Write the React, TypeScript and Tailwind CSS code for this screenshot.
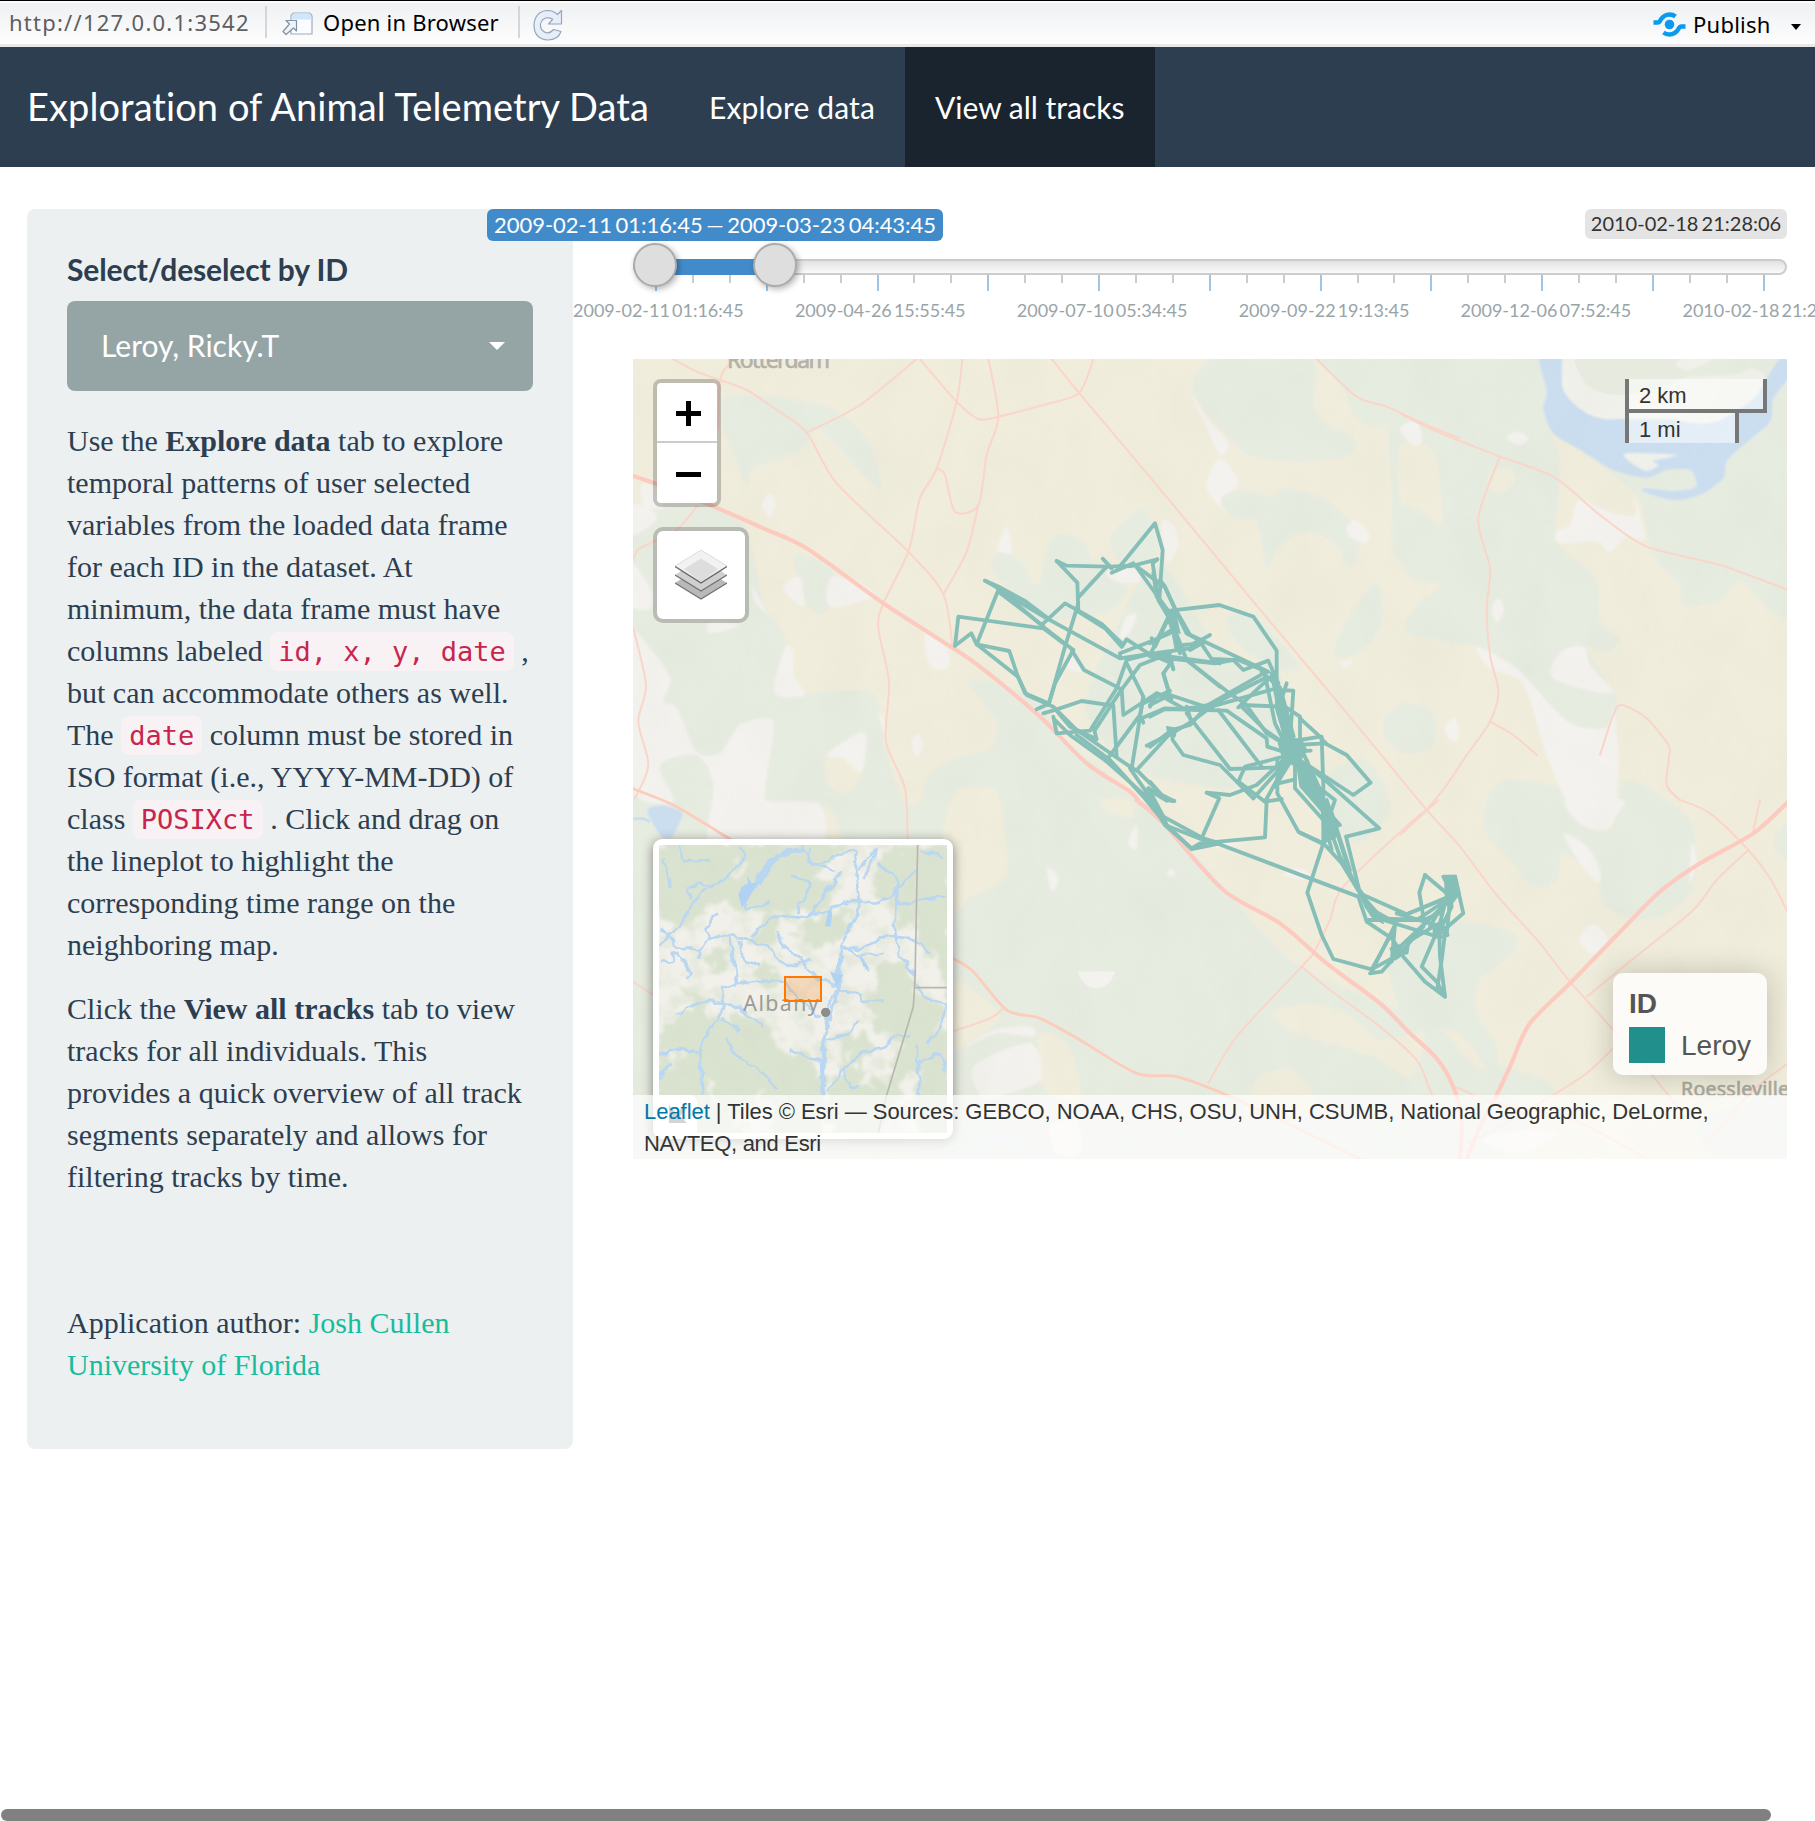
import React from "react";

type Pt = [number, number];

const parse = (s: string): Pt[] =>
  s.trim().split(/\s+/).map((p) => p.split(",").map(Number) as Pt);

/** Smooth (Catmull-Rom) path through a list of points. */
function smooth(s: string, closed = false): string {
  const p = parse(s);
  const n = p.length;
  const at = (i: number) => (closed ? p[(i + n) % n] : p[Math.max(0, Math.min(n - 1, i))]);
  let d = `M${p[0][0]},${p[0][1]}`;
  for (let i = 0; i < (closed ? n : n - 1); i++) {
    const [a, b, c, e] = [at(i - 1), at(i), at(i + 1), at(i + 2)];
    d += `C${b[0] + (c[0] - a[0]) / 7},${b[1] + (c[1] - a[1]) / 7} ${c[0] - (e[0] - b[0]) / 7},${c[1] - (e[1] - b[1]) / 7} ${c[0]},${c[1]}`;
  }
  return closed ? d + "Z" : d;
}

/* The map is stored as sheets; every sheet has an origin and is drawn at a third of its size. */
interface Sheet {
  x: number;
  y: number;
  green?: string[];
  cream?: string[];
  white?: string[];
  water?: string[];
  sand?: string[];
  minor?: string[];
  medium?: string[];
  major?: string[];
}

const sheets: Sheet[] = [
  {
    x: 930, y: 800,
    green: ["0,0 240,-30 390,-180 780,150 1080,480 1410,630 1590,750 1650,1080 -900,1080 -900,150 -300,90"],
    cream: [
      "80,-30 200,-20 225,100 230,230 120,290 75,330 40,120",
      "510,0 600,0 610,50 540,40",
      "1150,260 1250,170 1440,40 1520,200 1440,420 1340,520 1210,480 1140,330",
      "1030,640 1130,610 1250,640 1350,720 1480,700 1440,830 1330,770 1100,700",
      "960,880 1000,820 1080,810 1140,860 1150,940 960,940",
      "330,700 420,740 450,900 380,900 330,840",
      "60,540 190,620 200,670 60,750",
    ],
    white: [
      "130,800 300,730 330,840 200,890 160,900",
      "110,740 190,690 300,680 310,710 200,700",
      "350,200 385,235 365,272",
      "620,70 620,145 595,130",
      "850,130 940,130 860,145",
      "1060,225 1110,205 1150,240",
      "710,220 725,205 735,222 720,230",
      "360,980 440,960 450,1060 380,1060",
    ],
    medium: ["70,475 130,515 230,630 330,655 450,720 620,820 740,830 890,885 1050,960 1290,1077"],
    minor: [
      "60,697 180,655 220,625",
      "835,850 920,710 1115,500 1150,460 1200,360 1240,260 1440,70 1490,30",
      "1115,500 1200,570 1350,680 1460,780 1500,870 1540,960",
    ],
    major: ["620,0 700,70 880,270 1050,370 1190,490 1350,610 1440,700 1520,775 1570,860 1595,960 1590,1077"],
  },
  {
    x: 630, y: 355,
    green: [
      "285,130 420,125 560,145 650,190 720,270 755,400 700,360 630,280 560,220 520,280 430,320 370,340 350,395 325,330 280,220",
      "0,560 180,450 330,500 375,620 400,750 470,860 435,1010 640,1005 735,1020 760,1150 800,1300 830,1480 0,1480",
      "495,600 600,640 610,730 570,780 520,730",
      "1080,620 1130,590 1180,630 1215,690 1300,650 1380,760 1240,800 1130,700",
      "1020,980 1120,990 1260,1080 1300,1440 1120,1440 1100,1310 1040,1310 960,1370 930,1440 870,1440 890,1270 980,1210 1080,1180 1100,1100 1050,1030",
    ],
    cream: ["590,1205 660,1210 695,1260 640,1320 590,1280", "580,1350 620,1400 640,1500 560,1500"],
    white: [
      "0,450 60,460 80,490 50,520 0,540",
      "35,390 75,400 100,460 40,450",
      "0,620 60,700 60,760 0,750",
      "0,850 60,880 120,970 100,1040 140,1060 200,1190 270,1195 330,1110 420,1090 430,1140 405,1300 420,1340 570,1350 560,1500 250,1500 250,1290 200,1200 90,1230 130,1340 0,1290",
      "395,450 420,415 435,450 420,485",
      "460,700 510,665 520,755",
      "605,665 700,690 730,725 600,755",
      "885,830 950,880 955,940 900,930",
      "1105,570 1130,515 1145,590 1105,590",
      "465,880 490,890 490,960 525,1020 435,1015",
      "370,700 410,775 375,740",
      "240,800 330,810 240,835",
      "845,1160 865,1135 880,1170 860,1205",
      "590,1200 685,1135 710,1150 695,1250 640,1210",
      "745,1075 765,1100 770,1150",
    ],
    water: ["55,1360 100,1352 155,1370 150,1400 125,1445 95,1445 60,1390"],
    minor: [
      "130,12 200,50 270,75 350,105 440,165 530,233 620,385 835,590 940,718 968,880",
      "295,30 270,75 265,220",
      "530,233 690,150 860,12",
      "870,12 980,140 1045,192 1105,185 1240,150 1340,120 1370,70 1390,12",
      "997,12 980,140 920,340 870,430 835,590 760,745 745,820 777,980 768,1160 825,1300 833,1470",
      "1075,12 1105,185 1070,300 1045,450 975,470 945,360 920,340",
      "1045,450 1010,590 940,718",
      "10,820 48,990 25,1100 55,1230 15,1330",
      "200,455 140,525 30,580 12,610",
      "0,1875 70,1920",
    ],
    medium: ["0,1298 130,1350 280,1440 330,1470"],
    major: ["0,360 75,385 240,450 400,520 530,580 760,745 970,880 1050,935 1230,1085 1370,1225 1500,1310 1530,1345"],
  },
  {
    x: 1040, y: 355,
    green: [
      "520,12 810,12 820,150 860,210 940,250 930,300 800,320 640,305 560,240 460,110",
      "860,0 1260,0 1540,0 1540,500 1200,490 1200,300 1150,200 1020,215 950,190 910,100",
      "540,440 600,405 690,425 730,400 850,430 930,500 960,560 930,640 880,560 800,530 720,570 680,640 650,500 580,490",
      "1060,430 1110,430 1200,500 1280,500 1280,660 1200,680 1120,640 1060,590",
      "1280,640 1180,720 1100,800 1180,840 1280,860",
      "1010,685 1025,800 960,890 880,900 930,780",
      "560,790 640,780 720,860 780,940 700,940 600,870",
      "40,545 130,560 160,620 260,700 200,770 60,780 0,700",
      "210,550 300,460 330,500 350,600 260,640",
      "300,680 380,640 480,800 560,900 720,960 740,1200 600,1300 300,1250 150,1100 150,990 200,880",
      "870,1260 980,1215 1050,1360 960,1460 860,1400",
      "1030,1100 1080,1050 1160,1060 1190,1120 1130,1190 1050,1170",
    ],
    white: [
      "455,120 495,180 565,265 540,300 500,220",
      "540,310 595,385 540,435 575,490 500,400",
      "1080,220 1130,200 1145,260 1120,270",
      "920,520 945,495 985,530 980,565 930,545",
      "365,500 400,510 415,570 380,620",
      "900,920 940,915 915,940",
      "200,650 280,640 300,680 230,680",
      "1215,1125 1240,1090 1255,1135 1235,1150",
      "240,850 260,785 290,780 270,830",
      "90,900 130,950 80,940",
    ],
    minor: [
      "35,12 110,105 375,420 640,740 850,990 1020,1195 1160,1365 1260,1475 1370,1620 1500,1765 1590,1880 1720,2025 1840,2165 1920,2265",
      "830,12 950,125 1040,155 1160,210 1260,250",
      "1160,1365 1220,1290 1280,1200",
    ],
  },
  {
    x: 1400, y: 355,
    green: [
      "0,0 460,0 470,500 480,570 590,680 600,800 660,850 620,890 560,880 640,1010 660,1060 620,1115 540,1120 450,1060 350,950 230,875 20,830 60,740 120,690 0,610",
      "400,0 440,110 430,160 460,240 480,330 640,390 720,440 760,600 840,690 850,750 960,740 1020,680 1180,760 1180,0",
      "0,1050 60,1060 105,1120 90,1180 0,1190",
    ],
    cream: [
      "0,270 100,290 125,500 60,470 0,430",
      "465,240 640,360 710,430 700,480 540,440 490,530 470,510 480,330",
      "270,350 330,340 345,380 300,415 265,400",
    ],
    white: [
      "540,435 640,475 705,480 705,425 735,550 680,545 630,590 590,560 480,565 470,530 510,510",
      "10,225 45,200 65,245 45,270",
      "320,250 350,230 385,250 360,270",
      "275,760 295,730 312,765 290,802",
      "460,920 500,880 555,878 570,930 640,1010 560,1005 460,970",
      "230,875 350,940 450,1050 520,1110 620,1120 640,1060 655,1200 640,1400 570,1420 510,1360 440,1200 370,990 270,940",
      "135,1120 165,1090 175,1150 150,1155",
    ],
    water: [
      "418,0 490,0 490,100 540,160 610,190 680,190 820,195 900,200 960,195 1060,130 1100,70 1150,0 1170,60 1120,130 1110,200 1030,270 980,320 970,370 900,420 820,435 730,410 740,400 820,408 880,400 890,385 870,345 800,345 740,368 640,345 550,290 460,235 430,160 440,110",
    ],
    sand: [
      "490,0 530,12 555,85 620,115 740,110 850,70 1000,60 1060,40 1095,70 1060,130 960,195 880,205 800,190 610,190 540,160 490,100",
      "680,295 830,300 760,318 775,330 740,348 690,320",
      "810,12 930,12 860,45",
    ],
    minor: [
      "0,175 100,225 300,305 460,365 600,480 740,575 960,630 1170,707",
      "300,305 235,490 270,640 260,760 270,900 295,1010 270,1100 200,1200",
      "270,1100 340,1140 410,1200",
      "600,1200 640,1080 665,1050 740,1090 805,1170 808,1200 800,1290 840,1335",
    ],
  },
  {
    x: 1400, y: 800,
    green: [
      "260,0 320,-60 500,-30 560,80 640,80 680,-60 840,30 885,100 880,260 800,340 700,360 610,310 590,240 490,160 470,240 400,260 340,190 260,100",
      "-40,370 200,365 340,400 340,460 240,540 230,640 290,740 280,830 180,700 60,690 0,640",
      "1180,50 1120,130 1180,190",
      "190,830 300,800 430,840 450,885 200,885",
      "-20,830 60,840 80,900 -20,900",
      "900,960 1180,880 1180,1077 960,1077",
    ],
    white: [
      "500,0 670,0 620,70 570,85 520,50",
      "490,100 560,140 600,210 595,250 540,190",
      "537,418 580,373 623,418 580,463",
      "875,130 890,180 870,250",
      "250,1020 380,990 480,1000 360,1060",
    ],
    minor: [
      "0,105 115,0",
      "840,0 930,40 1045,150 1110,235 1165,340",
      "1080,0 1060,90",
      "1045,150 950,240 880,330 720,460 560,590",
      "640,745 560,820 460,885 300,980 200,1030",
      "1165,790 1060,870 920,1030",
      "170,862 290,910 520,960 740,1077",
    ],
    major: ["1170,0 1060,100 900,190 780,275 680,375 520,540 390,670 330,800 290,885 240,980 200,1077"],
  },
];

const trackNorth = [
  "75,437 85,350 340,385 400,430", "75,437 124,400 140,433 238,453 262,525 285,580 355,610",
  "205,270 140,433 260,527", "165,242 205,265 345,385 430,450", "165,242 210,262 285,303 350,352",
  "205,268 345,352 570,475 660,462 870,490", "205,275 340,378", "340,370 405,310 445,332 515,372 580,435",
  "430,450 375,550 355,615", "445,310 405,440 357,610", "425,450 462,510 575,568 580,645 680,580 725,595",
  "380,183 442,248 445,335 525,385 575,440", "380,183 410,197 530,200 605,198 682,178", "530,200 445,292",
  "518,176 545,205", "545,218 610,190", "565,205 675,70 698,150 688,300", "682,178 668,190 685,300 715,350",
  "610,192 705,262 735,325 780,405", "615,195 680,285 720,340", "575,440 590,418 655,460 725,490 730,508",
  "570,460 660,425 720,400", "570,462 570,475", "320,628 355,612", "340,640 380,628",
  "262,527 290,585 370,620 420,680 500,718 490,680", "370,650 380,700 480,692 560,565 590,480 660,462",
  "495,690 570,575 630,495 720,460", "380,628 455,603 550,617 560,770", "375,660 420,705 528,783",
  "380,630 440,690 600,800 625,815 710,900 733,903", "655,865 725,902", "655,865 700,950 710,975",
  "440,705 540,780 640,890 705,970 785,1047 870,1030", "530,785 655,895", "600,805 700,950 820,1015 870,1030",
  "530,780 630,645 640,590 590,490", "605,805 640,590", "625,805 725,695", "640,668 635,655 705,625 830,630",
  "650,737 725,700 785,665 870,600", "715,340 770,480 870,560", "715,350 750,460", "720,590 700,520 725,485",
  "665,415 675,440 720,345", "640,610 720,572", "770,620 785,670",
];

const trackSouth = [
  "10,-20 20,50 60,100 80,210", "30,0 45,20 85,110 110,160 150,182 180,165", "60,100 0,225", "65,150 0,190",
  "62,92 208,75 310,110 380,212 380,330", "110,160 355,275", "150,185 185,237 250,240 280,270 355,242 385,310",
  "0,230 195,250 260,238 350,275", "0,222 120,205 150,190", "120,210 155,190 100,195", "0,220 65,250 70,268",
  "110,240 245,345 285,370 350,460 400,490", "40,280 60,345 165,380", "60,345 0,375", "0,380 20,340 100,385 165,380",
  "0,410 45,387 230,392 350,475 352,500 400,515", "165,380 350,275", "165,385 350,292", "165,385 390,322",
  "0,500 65,450 120,435 165,385", "65,450 68,480 100,525 210,555 310,655", "110,400 240,567 400,562",
  "205,390 335,560", "275,375 400,380", "265,382 330,320 375,280", "275,380 345,450 410,495", "345,285 375,430 410,500",
  "365,280 385,380 410,500", "410,310 390,370 450,410 450,500", "380,330 430,332 420,480", "335,275 385,320 435,500",
  "450,415 510,470 450,480", "515,470 520,620 520,790", "435,495 525,490 590,525 662,608 610,645 480,560",
  "510,472 530,492", "440,515 482,512", "450,540 525,600 688,745 588,770 630,940", "345,665 430,510",
  "310,655 430,520", "375,620 430,530", "265,605 285,560 400,530", "170,638 240,645 320,615 400,540",
  "170,638 208,655 155,775", "270,608 345,665 395,657", "350,660 345,772 150,790 125,805 45,735 0,660",
  "382,540 382,640 445,755 520,790", "385,610 435,598", "435,520 435,625 520,720", "440,540 515,690", "460,520 515,640 545,740",
  "470,540 490,610 555,660 535,720", "520,680 570,735 550,740", "520,690 570,830 625,930", "545,700 600,870", "530,660 600,880 625,930",
  "450,758 525,795 575,850 630,940", "520,710 545,810", "520,790 472,938 515,1065 550,1137 665,1168 735,1130",
  "0,640 45,735 160,780 200,790 625,950", "0,605 35,645 70,662", "0,632 50,662", "125,805 200,790",
  "620,920 640,945 770,1003 885,955", "625,950 650,1025 725,1075 750,1110", "640,960 680,1015 820,1020 870,1000",
  "655,1020 800,1020 890,960", "630,940 700,1020 870,1072 893,1065", "660,1180 695,1175 740,1125", "665,1175 735,1035 725,1145",
  "665,1168 725,1060", "740,1110 820,1035 925,935", "735,1120 770,1118 775,1085 850,1040", "750,1120 820,1040",
  "760,1130 825,1205 885,1250 870,1130 868,1060", "885,1250 860,1205 815,1160 865,1045", "862,1225 875,1140 885,1060",
  "870,1060 940,1000 915,890 880,890 905,940", "825,885 808,938 820,1010", "825,885 890,940", "905,890 870,1030",
  "895,900 905,980 870,1050", "770,1003 900,950", "740,1000 890,1045", "885,960 840,1040", "900,960 890,1065", "650,980 740,1030",
];

const trackFills = [
  "385,490 410,470 455,480 470,510 440,560 400,540", "515,690 550,700 560,770 520,790", "625,930 680,1000 700,1030 665,1010 645,980",
  "885,888 918,886 930,940 895,985 885,940", "720,1105 750,1095 765,1120 735,1140", "385,330 400,345 435,470 405,480 375,380",
  "440,550 470,545 520,650 520,700 450,620", "850,1035 880,1020 880,1060 850,1065", "45,85 75,95 90,160 60,140", "125,190 150,175 165,190 120,210",
  "50,440 80,445 75,470 55,465", "150,375 190,370 190,390 150,392",
];

function MapCanvas() {
  return (
    <svg className="absolute inset-0 block h-[800px] w-[1154px]" viewBox="633 359 1154 800" aria-hidden="true">
      <defs>
        <filter id="relief" x="0" y="0" width="100%" height="100%">
          <feTurbulence type="fractalNoise" baseFrequency="0.022 0.016" numOctaves="3" seed="4" />
          <feColorMatrix values="0 0 0 0 0.4  0 0 0 0 0.43  0 0 0 0 0.34  0.5 0 0 0 -0.2" />
        </filter>
        <filter id="soft" x="-5%" y="-5%" width="110%" height="110%">
          <feGaussianBlur stdDeviation="2.4" />
        </filter>
      </defs>
      <rect x="633" y="359" width="1154" height="800" fill="#f0eddc" />
      {(["green", "cream", "white", "water", "sand"] as const).map((kind) => (
        <React.Fragment key={kind}>
          {sheets.map((s) => (
            <g
              key={`${s.x}-${s.y}`}
              transform={`translate(${s.x} ${s.y}) scale(.33333)`}
              filter="url(#soft)"
              fill={{ green: "#e7ece1", cream: "#f0eddc", white: "#f4f2ee", water: "#cbdef0", sand: "#f1f1eb" }[kind]}
            >
              {(s[kind] ?? []).map((p) => <path key={p} d={smooth(p, true)} />)}
            </g>
          ))}
        </React.Fragment>
      ))}
      <rect x="633" y="359" width="1154" height="800" filter="url(#relief)" opacity="0.2" />
      <path d="M1078,971.500 H1115 Q1110,988 1096.500,988 Q1083,988 1078,971.500Z" fill="#f4f2ee" />
      <path d="M633,819 Q645,817 650,822" fill="none" stroke="#cbdef0" strokeWidth="3" />
      <path d="M950,1152 Q968,1148 966,1125 M970,1159 Q990,1132 1010,1138 T1040,1159" fill="none" stroke="#d9e5f4" strokeWidth="2.500" />
      <path d="M1574,359 Q1582,388 1608,394 Q1640,398 1660,380 L1680,359Z" fill="#e6eadf" />
      {sheets.map((s) => (
        <g key={`r${s.x}-${s.y}`} transform={`translate(${s.x} ${s.y}) scale(.33333)`} fill="none" strokeLinecap="round" strokeLinejoin="round">
          {(s.minor ?? []).map((p) => <path key={p} d={smooth(p)} stroke="#fad5c9" strokeWidth="6" />)}
          {(s.medium ?? []).map((p) => <path key={p} d={smooth(p)} stroke="#fcccbc" strokeWidth="8.500" />)}
          {(s.major ?? []).map((p) => <path key={p} d={smooth(p)} stroke="#fdcac0" strokeWidth="12.500" />)}
        </g>
      ))}
      <g fontFamily="'Noto Sans', sans-serif" fill="#b3b1a8" stroke="#b3b1a8" strokeWidth="0.600">
        <text x="727" y="367.500" fontSize="23" textLength="103">Rotterdam</text>
        <text x="1681" y="1095.500" fontSize="19.500" textLength="108" fill="#aaa89f" stroke="#aaa89f">Roessleville</text>
      </g>
      <g stroke="#86bfb7" strokeWidth="11.500" strokeLinecap="round" strokeLinejoin="round">
        <g transform="translate(930 500) scale(.33333)" fill="none">
          {trackNorth.map((p) => <polyline key={p} points={p} />)}
        </g>
        <g transform="translate(1150 580) scale(.33333)" fill="none">
          {trackSouth.map((p) => <polyline key={p} points={p} />)}
        </g>
        <g transform="translate(1150 580) scale(.33333)" fill="#86bfb7" strokeWidth="4">
          {trackFills.map((p) => <polygon key={p} points={p} />)}
        </g>
      </g>
    </svg>
  );
}

const forest = [
  "87,75 620,75 600,130 560,180 640,200 600,250 520,290 400,280 330,270 260,250 200,290 160,320 87,280",
  "740,120 860,75 960,75 960,250 900,300 870,260 830,330 780,240 720,200",
  "880,180 960,160 960,560 920,420 870,380 850,300",
  "580,290 640,270 640,340 600,370 500,350 520,320", "400,290 450,310 420,370 370,370",
  "740,440 810,420 850,480 860,560 830,660 760,640 700,560 740,500", "850,520 930,560 900,660 850,760 800,830 780,900 790,720 830,640",
  "87,640 200,560 290,600 380,580 440,650 470,720 460,800 360,850 300,940 87,940", "440,720 560,730 560,940 420,940",
  "620,650 720,640 700,740 640,760", "600,800 680,760 780,800 760,940 600,940", "870,700 960,640 960,940 860,940",
  "220,400 280,390 300,440 250,450", "160,500 230,540 190,570", "380,420 450,470 400,500",
];
const meadow = ["640,700 690,690 660,730", "700,780 740,760 730,830", "460,600 540,640 500,680", "230,780 280,830 250,850", "110,700 150,690 130,740", "300,140 340,130 330,170"];
const rivers = [
  "330,75 345,110 300,160 230,210 190,250 150,310 110,360 87,370", "87,320 115,350 150,385 210,385 240,350 310,350 360,360 430,400 480,440 540,415",
  "520,80 440,110 400,150 370,200 340,260 420,250", "510,75 560,130 620,110 680,90 675,140 685,230 680,280 640,370 630,440 620,500 595,560 585,640 575,740 575,830",
  "685,150 740,90 700,180", "640,150 600,200 530,290 440,285 360,350", "530,290 600,270 660,240 740,250 800,210 860,150",
  "800,210 795,320 810,400 850,460 880,530 945,550 930,620 890,670", "640,380 700,385 770,350 840,355 900,400", "640,380 690,410 715,445", "690,405 760,405",
  "620,500 560,470 510,420 450,360 445,335", "300,355 305,400 320,490 275,510 280,570 230,640 210,720 220,830", "145,580 190,555 275,545 340,570 400,620",
  "320,490 380,480 460,485 490,520 570,590", "330,360 340,410 390,440", "620,520 670,515 700,545 760,540", "590,655 660,635 680,600",
  "290,655 320,710 400,760 440,810", "480,685 500,700 580,730", "87,705 150,685 210,700", "590,820 640,750 690,700 760,680 800,650 835,650",
  "640,750 660,800 690,795", "540,80 545,130 620,150", "480,170 540,190 500,280", "100,120 120,210", "87,420 130,425 130,395 180,450 170,480",
  "265,280 225,330 240,350", "740,130 800,180 805,250 880,240 945,225", "860,730 930,705 945,760", "860,680 870,830", "150,75 160,120 240,120", "870,90 945,115", "87,775 125,735", "270,600 330,635", "210,390 210,420", "250,195 180,200 185,235",
];

function MiniMap() {
  return (
    <div className="absolute left-[20px] top-[480px] size-[300px] rounded-[9px] border-[6px] border-white bg-white shadow-[0_2px_12px_rgba(0,0,0,0.45)]">
      <svg className="block size-[288px]" viewBox="87 75 864 864" aria-hidden="true">
        <defs>
          <filter id="rough" x="-5%" y="-5%" width="110%" height="110%">
            <feTurbulence type="fractalNoise" baseFrequency="0.02" numOctaves="4" seed="8" />
            <feDisplacementMap in="SourceGraphic" scale="95" xChannelSelector="R" yChannelSelector="G" />
            <feGaussianBlur stdDeviation="5" />
          </filter>
          <filter id="wiggle" x="-5%" y="-5%" width="110%" height="110%">
            <feTurbulence type="fractalNoise" baseFrequency="0.03" numOctaves="2" seed="2" />
            <feDisplacementMap in="SourceGraphic" scale="26" xChannelSelector="R" yChannelSelector="G" />
          </filter>
          <filter id="speckle" x="0" y="0" width="100%" height="100%">
            <feTurbulence type="fractalNoise" baseFrequency="0.018" numOctaves="5" seed="12" />
            <feColorMatrix values="0 0 0 0 0.68  0 0 0 0 0.75  0 0 0 0 0.6  3 0 0 0 -1.25" />
          </filter>
        </defs>
        <rect x="87" y="75" width="864" height="864" fill="#f1f0ea" />
        <g filter="url(#rough)" fill="#dae3d0">{forest.map((p) => <path key={p} d={smooth(p, true)} />)}</g>
        <g filter="url(#rough)" fill="#eff0e8">{meadow.map((p) => <path key={p} d={smooth(p, true)} />)}</g>
        <rect x="87" y="75" width="864" height="864" filter="url(#speckle)" opacity="0.5" />
        <g filter="url(#wiggle)" fill="none" stroke="#bad7f2" strokeWidth="8" strokeLinejoin="round">
          {rivers.map((p) => <path key={p} d={smooth(p)} />)}
          <path d="M630,400 L628,500 L585,640 L578,830" strokeWidth="11" />
          <path d="M520,85 L440,108 L385,190" strokeWidth="14" />
        </g>
        <path d="M350,165 L365,190 L385,185 L350,245 L335,262 L325,225 L335,200 L355,190Z M595,270 L607,275 L602,320 L585,318Z M690,405 L718,445 L700,440Z M600,455 L640,465 L620,500Z" fill="#b1d2f3" />
        <g fill="none" stroke="#b9b6b2" strokeWidth="5"><path d="M863,75 L855,480 L850,560 L770,825 L745,939" /><path d="M853,503 H951" /></g>
        <text x="340" y="573" fontSize="64" textLength="226" fontFamily="'Noto Sans', sans-serif" fill="#9b9b98">Albany</text>
        <circle cx="587" cy="577" r="14" fill="#8d8d8c" />
        <rect x="465" y="471" width="108" height="72" fill="#ff7800" fillOpacity="0.2" stroke="#ff7800" strokeWidth="6" />
      </svg>
      <div className="absolute bottom-0 left-0 flex size-[38px] items-center justify-center rounded-tr-[8px] bg-white">
        <svg viewBox="0 0 18 18" className="size-[18px]" aria-hidden="true"><path d="M0,0 V18 H18 L11,11 L17,4 L12,4 L7,8Z" fill="#6f6f6f" /></svg>
      </div>
    </div>
  );
}

function LayersIcon() {
  return (
    <svg viewBox="0 0 52 52" className="size-[52px]" aria-hidden="true">
      <path d="M0,34 L26,18 L52,34 L26,50Z" fill="#b9b9b9" /><path d="M0,34 L26,50 L52,34" fill="none" stroke="#737373" strokeWidth="1.300" />
      <path d="M0,26 L26,10 L52,26 L26,42Z" fill="#cfcfcf" /><path d="M0,26 L26,42 L52,26" fill="none" stroke="#737373" strokeWidth="1.300" />
      <path d="M0,17 L26,1 L52,17 L26,33Z" fill="#f2f2f2" stroke="#c9c9c9" strokeWidth="0.600" /><path d="M9,20 L26,9.500 L43,20 L26,33Z" fill="#dddddd" />
      <path d="M0,17.500 L26,34 L52,17.500" fill="none" stroke="#666" strokeWidth="1.300" />
    </svg>
  );
}

function Toolbar() {
  return (
    <header className="flex h-[47px] items-start border-t border-b-[3px] border-t-black border-b-[#e6e8ea] bg-linear-to-b from-[#eef0f2] to-[#fdfdfd] font-['Noto_Sans',sans-serif] text-[22px] leading-[43px] text-black shadow-[inset_0_2px_0_#fcfcfc]">
      <span className="ml-[9px] w-[240px] whitespace-nowrap tracking-[1.240px] text-[#5e5e5e]">http://127.0.0.1:3542</span>
      <span className="ml-[16px] mt-[5px] h-[32px] w-[2px] bg-[#d4d6d7]" />
      <svg className="ml-[15px] mt-[10px] h-[26px] w-[32px]" viewBox="0 0 32 26" aria-hidden="true">
        <path d="M9,6 Q9,2 13,2 H26 Q30,2 30,6 V23 H9Z" fill="#fafdff" stroke="#9dacbd" strokeWidth="1.200" />
        <path d="M9.600,8.500 V6 Q9.600,2.600 13,2.600 H26 Q29.400,2.600 29.400,6 V8.500Z" fill="#cfe6fb" />
        <path d="M4,9.500 H14.500 V20 L11.500,17 L4,23.500 L1,20.500 L7.500,13Z" fill="#eef3fa" stroke="#8391a3" strokeWidth="1.200" strokeLinejoin="round" />
      </svg>
      <span className="ml-[9px] w-[177px] whitespace-nowrap tracking-[0.220px]">Open in Browser</span>
      <span className="ml-[18px] mt-[5px] h-[32px] w-[2px] bg-[#d4d6d7]" />
      <svg className="ml-[13px] mt-[8px] h-[32px] w-[30px]" viewBox="0 0 30 32" aria-hidden="true">
        <path d="M24.500,5.500 L28.500,1.500 V15 H15.500 L19.800,10.200 Q14,6.500 9.500,11 Q5.500,16 9,21 Q15,27 20.500,20.500 L28,22.500 Q25,31 15,31 Q1,30 1,16 Q2,2 15,1.500 Q20,1.500 24.500,5.500Z" fill="#e6eefa" stroke="#98a6bb" strokeWidth="1.200" strokeLinejoin="round" />
      </svg>
      <svg className="ml-auto mt-[11px] h-[26px] w-[33px]" viewBox="0 0 33 26" fill="none" stroke="#0a9bf0" strokeWidth="4.400" aria-hidden="true">
        <circle cx="16.500" cy="12.500" r="4.800" fill="#0a9bf0" stroke="none" />
        <path d="M0.500,10.500 H4.500 Q6.500,10.500 7.500,8 Q11,2.500 16.500,2.500 Q20,2.500 22.500,4.500" />
        <path d="M32.500,14.500 H28.500 Q26.500,14.500 25.500,17 Q22,22.500 16.500,22.500 Q13,22.500 10.500,20.500" />
      </svg>
      <span className="ml-[7px] mt-[2px] w-[79px] whitespace-nowrap tracking-[0.250px]">Publish</span>
      <span className="ml-[19px] mr-[14px] mt-[23px] border-x-[5px] border-t-[6px] border-x-transparent border-t-black" />
    </header>
  );
}

const gridLabels = ["2009-02-11 01:16:45", "2009-04-26 15:55:45", "2009-07-10 05:34:45", "2009-09-22 19:13:45", "2009-12-06 07:52:45", "2010-02-18 21:28:06"];
const handle = "absolute top-0 size-[44px] rounded-full border-2 border-[#ababab] bg-[#dedede] shadow-[2px_2px_6px_rgba(0,0,0,0.3)]";

function TimeSlider() {
  return (
    <div className="h-[150px] w-[1154px] font-[Lato,sans-serif]">
      <div className="flex h-[34px] items-start justify-between whitespace-nowrap">
        <span className="-ml-[146px] h-[32px] w-[456px] rounded-[6px] bg-[#428bca] text-center text-[22px] leading-[32px] tracking-[-0.050px] text-white [word-spacing:-2px]">2009-02-11 01:16:45 — 2009-03-23 04:43:45</span>
        <span className="h-[30px] w-[202px] rounded-[6px] bg-[#e4e4e4] text-center text-[20px] leading-[29px] text-[#333] [word-spacing:-2px]">2010-02-18 21:28:06</span>
      </div>
      <div className="relative h-[48px] pt-[16px]">
        <div className="h-[16px] rounded-[16px] border-2 border-[#ccc] bg-linear-to-b from-[#e2e2e2] to-[#fafafa]">
          <div className="-mt-[2px] ml-[20px] h-[16px] w-[120px] bg-[#428bca]" />
        </div>
        <div className="ml-[22px] flex w-[1110px] items-start justify-between">
          {Array.from({ length: 31 }, (_, i) => (
            <span key={i} className={i % 3 === 0 ? "h-[16px] w-[2px] bg-[#a0c5e4]" : "h-[8px] w-[2px] bg-[#ccc]"} />
          ))}
        </div>
        <span className={`${handle} left-0`} />
        <span className={`${handle} left-[120px]`} />
      </div>
      <div className="-ml-[60px] flex w-[1332px] text-[18px] leading-[38px] text-[#99a4a8] [word-spacing:-2.500px]">
        {gridLabels.map((t) => <span key={t} className="w-[221.900px] shrink-0 whitespace-nowrap">{t}</span>)}
      </div>
    </div>
  );
}

function Code({ children }: { children: string }) {
  return <code className="rounded-[8px] bg-[#f9f2f4] px-[8px] py-[4px] font-['DejaVu_Sans_Mono',monospace] text-[27px] leading-none text-[#c7254e]">{children}</code>;
}

function Lines({ rows }: { rows: React.ReactNode[] }) {
  return <p>{rows.map((r, i) => <span key={i} className="block h-[42px] whitespace-nowrap">{r}</span>)}</p>;
}

function Sidebar() {
  return (
    <aside className="h-[1240px] w-[546px] shrink-0 rounded-[8px] bg-[#ecf0f1] px-[40px] pt-[39px] text-[#2c3e50]">
      <label className="block h-[53px] font-[Lato,sans-serif] text-[30px] font-bold leading-[42px] tracking-[-0.120px]">Select/deselect by ID</label>
      <button className="flex h-[90px] w-[466px] items-center justify-between rounded-[8px] bg-[#95a5a6] pl-[34px] pr-[28px] font-[Lato,sans-serif] text-[30px] text-white">
        <span className="-mt-[2px]">Leroy, Ricky.T</span>
        <span className="border-x-[8px] border-t-[8px] border-x-transparent border-t-white" />
      </button>
      <div className="mt-[29px] space-y-[22px] font-['Liberation_Serif',serif] text-[30px] leading-[42px]">
        <Lines rows={[
          <>Use the <b>Explore data</b> tab to explore</>, "temporal patterns of user selected", "variables from the loaded data frame",
          "for each ID in the dataset. At", "minimum, the data frame must have", <>columns labeled <Code>id, x, y, date</Code> ,</>,
          "but can accommodate others as well.", <>The <Code>date</Code> column must be stored in</>, "ISO format (i.e., YYYY-MM-DD) of",
          <>class <Code>POSIXct</Code> . Click and drag on</>, "the lineplot to highlight the", "corresponding time range on the", "neighboring map.",
        ]} />
        <Lines rows={[<>Click the <b>View all tracks</b> tab to view</>, "tracks for all individuals. This", "provides a quick overview of all track", "segments separately and allows for", "filtering tracks by time."]} />
      </div>
      <p className="mt-[104px] font-['Liberation_Serif',serif] text-[30px] leading-[42px]">
        Application author: <a className="text-[#18bc9c]">Josh Cullen</a><br /><a className="text-[#18bc9c]">University of Florida</a>
      </p>
    </aside>
  );
}

function LeafletMap() {
  return (
    <div className="relative h-[800px] w-[1154px] overflow-hidden font-['Liberation_Sans',sans-serif]">
      <MapCanvas />
      <div className="absolute left-[20px] top-[20px] h-[128px] w-[68px] rounded-[8px] border-4 border-black/20 bg-white bg-clip-padding">
        <div className="flex h-[60px] items-center justify-center border-b-2 border-[#ccc] pl-[3px] pt-[3px]">
          <svg viewBox="0 0 25 25" className="size-[25px]" aria-hidden="true"><path d="M0,12.500 H25 M12.500,0 V25" stroke="#000" strokeWidth="5" /></svg>
        </div>
        <div className="flex h-[60px] items-center justify-center pl-[3px] pt-[2px]"><span className="h-[5px] w-[25px] bg-black" /></div>
      </div>
      <div className="absolute left-[20px] top-[168px] flex size-[96px] items-center justify-center rounded-[10px] border-4 border-black/20 bg-white bg-clip-padding"><LayersIcon /></div>
      <div className="absolute right-[20px] top-[20px] w-[142px] text-[22px] text-[#333]">
        <div className="h-[34px] w-[142px] border-4 border-t-0 border-[#777] bg-white/50 bg-clip-padding pl-[10px] leading-[34px]">2 km</div>
        <div className="h-[30px] w-[114px] border-x-4 border-[#777] bg-white/50 bg-clip-padding pl-[10px] leading-[34px]">1 mi</div>
      </div>
      <MiniMap />
      <div className="absolute left-[980px] top-[614px] h-[102px] w-[154px] rounded-[10px] bg-white/80 pl-[16px] pt-[12px] text-[28px] text-[#555] shadow-[0_0_30px_rgba(0,0,0,0.2)]">
        <div className="h-[42px] font-bold leading-[37px]">ID</div>
        <div className="flex h-[36px] items-center"><span className="mr-[16px] size-[36px] bg-[#21908c]" /><span className="pt-[2px]">Leroy</span></div>
      </div>
      <div className="absolute inset-x-0 bottom-0 h-[64px] whitespace-nowrap bg-white/70 pl-[11px] pt-px text-[22px] leading-[32px] tracking-[-0.040px] text-[#333]">
        <a className="text-[#0078a8]">Leaflet</a> | Tiles © Esri — Sources: GEBCO, NOAA, CHS, OSU, UNH, CSUMB, National Geographic, DeLorme,<br /><span className="tracking-[-0.300px]">NAVTEQ, and Esri</span>
      </div>
    </div>
  );
}

export default function App() {
  return (
    <div className="flex h-[1821px] w-[1815px] flex-col overflow-hidden bg-white">
      <Toolbar />
      <nav className="flex h-[120px] shrink-0 items-stretch whitespace-nowrap bg-[#2c3e50] pl-[27px] font-[Lato,sans-serif] text-[30px] leading-[120px] text-white">
        <span className="w-[652px] text-[38px] leading-[119px] tracking-[0.070px]">Exploration of Animal Telemetry Data</span>
        <a className="w-[226px] pl-[30px] tracking-[0.150px]">Explore data</a>
        <a className="w-[250px] bg-[#1a242f] pl-[30px]">View all tracks</a>
      </nav>
      <main className="flex flex-1 items-start gap-[60px] pl-[27px] pt-[42px]">
        <Sidebar />
        <section className="w-[1154px] shrink-0">
          <TimeSlider />
          <LeafletMap />
        </section>
      </main>
      <footer className="flex h-[12px] shrink-0 items-start pl-px"><span className="h-[12px] w-[1770px] rounded-full bg-[#808080]" /></footer>
    </div>
  );
}
